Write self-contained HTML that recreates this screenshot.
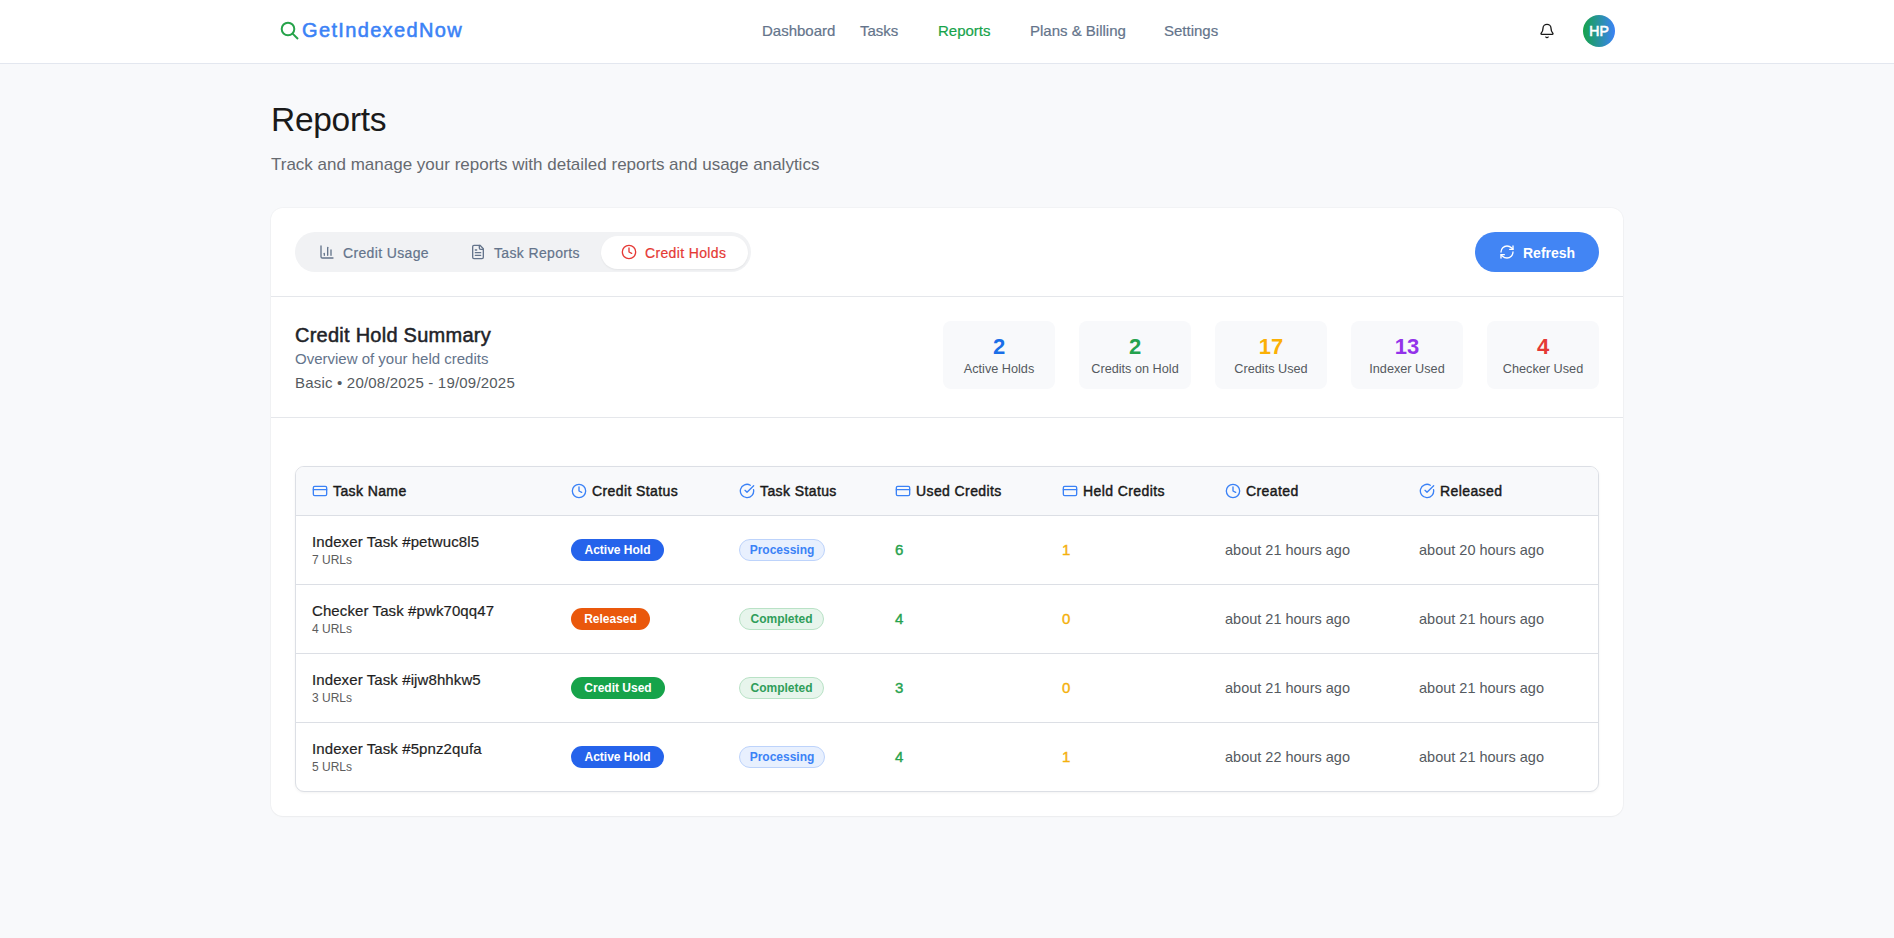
<!DOCTYPE html>
<html><head><meta charset="utf-8">
<style>
*{box-sizing:border-box;margin:0;padding:0}
html,body{width:1894px;height:938px;overflow:hidden}
body{background:#f8f9fb;font-family:"Liberation Sans",sans-serif;color:#1a1a1a;position:relative}
.abs{position:absolute;white-space:nowrap}
.hdr{position:absolute;left:0;top:0;width:1894px;height:64px;background:#fff;border-bottom:1px solid #e3e7ef}
.logo{left:302px;top:19px;font-size:20px;font-weight:400;-webkit-text-stroke:0.55px;letter-spacing:1.35px;color:#3b82f6;line-height:22px}
.nav{top:22px;font-size:15px;line-height:17px;color:#64748b;-webkit-text-stroke:0.2px}
.nav.on{color:#16a34a}
.avatar{left:1583px;top:15px;width:32px;height:32px;border-radius:50%;background:linear-gradient(to right,#16a34a 0%,#3b82f6 100%);color:#fff;font-weight:400;-webkit-text-stroke:0.6px;font-size:14px;line-height:32px;text-align:center}
.title{left:271px;top:100.5px;font-size:33.5px;letter-spacing:-0.3px;line-height:38px;color:#1a1a1a}
.sub{left:271px;top:155px;font-size:17px;line-height:20px;color:#666a70}
.card{position:absolute;left:271px;top:208px;width:1352px;height:608px;background:#fff;border-radius:12px;box-shadow:0 0 0 1px rgba(0,0,0,0.025),0 1px 2px rgba(0,0,0,0.03)}
.line{position:absolute;left:271px;width:1352px;height:1px;background:#e5e7eb}
.tabs{left:295px;top:232px;width:456px;height:40px;border-radius:20px;background:#f1f2f4}
.tabon{left:601px;top:236px;width:147px;height:33px;border-radius:16.5px;background:#fff;box-shadow:0 1px 2px rgba(0,0,0,0.06)}
.tabt{top:245px;font-size:14px;letter-spacing:0.35px;-webkit-text-stroke:0.2px;line-height:16px;color:#64748b}
.btn{left:1475px;top:232px;width:124px;height:40px;border-radius:20px;background:#4285f4}
.btnt{left:1523px;top:245px;font-size:14px;line-height:16px;color:#fff;font-weight:700}
.h2{left:295px;top:324px;font-size:20px;line-height:22px;font-weight:400;-webkit-text-stroke:0.5px;letter-spacing:0.25px;color:#1f2328}
.ov{left:295px;top:351px;font-size:15px;line-height:16px;color:#64748b}
.basic{left:295px;top:375px;font-size:15px;letter-spacing:0.2px;line-height:16px;color:#555a60}
.stat{top:321px;width:112px;height:68px;border-radius:8px;background:#f8f9fb;text-align:center}
.stat .n{position:absolute;left:0;width:112px;top:15px;font-size:22px;line-height:22px;font-weight:700}
.stat .l{position:absolute;left:0;width:112px;top:41px;font-size:12.7px;line-height:14px;color:#555a60}
.tbl{left:295px;top:466px;width:1304px;height:326px;border:1px solid #dcdfe5;border-radius:9px;overflow:hidden;background:#fff;box-shadow:0 1px 3px rgba(0,0,0,0.05)}
.thead{position:absolute;left:0;top:0;width:1302px;height:49px;background:#f8f9fb;border-bottom:1px solid #dcdfe5}
.rowline{position:absolute;left:0;width:1302px;height:1px;background:#dcdfe5}
.th{top:483px;font-size:14px;line-height:16px;font-weight:400;-webkit-text-stroke:0.45px;letter-spacing:0.4px;color:#1a1a1a}
.ic{position:absolute}
.tn{font-size:15px;letter-spacing:0.1px;-webkit-text-stroke:0.2px;line-height:16px;color:#1f1f1f}
.urls{font-size:12px;line-height:14px;color:#5c5c5c}
.badge{height:22px;border-radius:11px;font-size:12px;line-height:22px;font-weight:700;color:#fff;text-align:center}
.pill{height:22px;border-radius:11px;font-size:12px;line-height:20px;font-weight:700;text-align:center;border:1px solid}
.num{font-size:15px;line-height:16px;font-weight:400;-webkit-text-stroke:0.4px}
.date{font-size:14.5px;line-height:16px;color:#555a60}
</style></head><body>
<div class="hdr"></div>
<!-- logo -->
<svg class="abs" style="left:279px;top:20px" width="22" height="22" viewBox="0 0 22 22"><circle cx="9" cy="9" r="6.3" fill="none" stroke="#26a34a" stroke-width="2"/><line x1="13.6" y1="13.6" x2="19" y2="19" stroke="#26a34a" stroke-width="2"/></svg>
<div class="abs logo">GetIndexedNow</div>
<div class="abs nav" style="left:762px">Dashboard</div>
<div class="abs nav" style="left:860px">Tasks</div>
<div class="abs nav on" style="left:938px">Reports</div>
<div class="abs nav" style="left:1030px">Plans &amp; Billing</div>
<div class="abs nav" style="left:1164px">Settings</div>
<svg class="abs" style="left:1539px;top:22.5px" width="16" height="16" viewBox="0 0 24 24" fill="none" stroke="#1a1a1a" stroke-width="2" stroke-linecap="round" stroke-linejoin="round"><path d="M10.268 21a2 2 0 0 0 3.464 0"/><path d="M3.262 15.326A1 1 0 0 0 4 17h16a1 1 0 0 0 .74-1.673C19.41 13.956 18 12.499 18 8A6 6 0 0 0 6 8c0 4.499-1.411 5.956-2.738 7.326"/></svg>
<div class="abs avatar">HP</div>

<div class="abs title">Reports</div>
<div class="abs sub">Track and manage your reports with detailed reports and usage analytics</div>

<div class="card"></div>
<div class="abs tabs"></div>
<div class="abs tabon"></div>
<svg class="abs" style="left:319px;top:244px" width="16" height="16" viewBox="0 0 24 24" fill="none" stroke="#64748b" stroke-width="2" stroke-linecap="round" stroke-linejoin="round"><path d="M3 3v16a2 2 0 0 0 2 2h16"/><path d="M18 17V9"/><path d="M13 17V5"/><path d="M8 17v-3"/></svg>
<div class="abs tabt" style="left:343px">Credit Usage</div>
<svg class="abs" style="left:470px;top:244px" width="16" height="16" viewBox="0 0 24 24" fill="none" stroke="#64748b" stroke-width="2" stroke-linecap="round" stroke-linejoin="round"><path d="M15 2H6a2 2 0 0 0-2 2v16a2 2 0 0 0 2 2h12a2 2 0 0 0 2-2V7Z"/><path d="M14 2v4a2 2 0 0 0 2 2h4"/><path d="M10 9H8"/><path d="M16 13H8"/><path d="M16 17H8"/></svg>
<div class="abs tabt" style="left:494px">Task Reports</div>
<svg class="abs" style="left:621px;top:244px" width="16" height="16" viewBox="0 0 24 24" fill="none" stroke="#e53935" stroke-width="2" stroke-linecap="round" stroke-linejoin="round"><circle cx="12" cy="12" r="10"/><polyline points="12 6 12 12 16 14"/></svg>
<div class="abs tabt" style="left:645px;color:#e53935">Credit Holds</div>

<div class="abs btn"></div>
<svg class="abs" style="left:1499px;top:244px" width="16" height="16" viewBox="0 0 24 24" fill="none" stroke="#fff" stroke-width="2" stroke-linecap="round" stroke-linejoin="round"><path d="M3 12a9 9 0 0 1 9-9 9.75 9.75 0 0 1 6.74 2.74L21 8"/><path d="M21 3v5h-5"/><path d="M21 12a9 9 0 0 1-9 9 9.75 9.75 0 0 1-6.74-2.74L3 16"/><path d="M8 16H3v5"/></svg>
<div class="abs btnt">Refresh</div>

<div class="line" style="top:296px"></div>

<div class="abs h2">Credit Hold Summary</div>
<div class="abs ov">Overview of your held credits</div>
<div class="abs basic">Basic • 20/08/2025 - 19/09/2025</div>

<div class="abs stat" style="left:943px"><div class="n" style="color:#1a6fe8">2</div><div class="l">Active Holds</div></div>
<div class="abs stat" style="left:1079px"><div class="n" style="color:#23a24d">2</div><div class="l">Credits on Hold</div></div>
<div class="abs stat" style="left:1215px"><div class="n" style="color:#fbb005">17</div><div class="l">Credits Used</div></div>
<div class="abs stat" style="left:1351px"><div class="n" style="color:#9333ea">13</div><div class="l">Indexer Used</div></div>
<div class="abs stat" style="left:1487px"><div class="n" style="color:#e53935">4</div><div class="l">Checker Used</div></div>

<div class="line" style="top:417px"></div>

<div class="abs tbl">
  <div class="thead"></div>
  <div class="rowline" style="top:117px"></div>
  <div class="rowline" style="top:186px"></div>
  <div class="rowline" style="top:255px"></div>
</div>
<svg class="abs" style="left:312px;top:483px" width="16" height="16" viewBox="0 0 24 24" fill="none" stroke="#3b82f6" stroke-width="2" stroke-linecap="round" stroke-linejoin="round"><rect width="20" height="14" x="2" y="5" rx="2"/><line x1="2" x2="22" y1="10" y2="10"/></svg>
<div class="abs th" style="left:333px">Task Name</div>
<svg class="abs" style="left:571px;top:483px" width="16" height="16" viewBox="0 0 24 24" fill="none" stroke="#3b82f6" stroke-width="2" stroke-linecap="round" stroke-linejoin="round"><circle cx="12" cy="12" r="10"/><polyline points="12 6 12 12 16 14"/></svg>
<div class="abs th" style="left:592px">Credit Status</div>
<svg class="abs" style="left:739px;top:483px" width="16" height="16" viewBox="0 0 24 24" fill="none" stroke="#3b82f6" stroke-width="2" stroke-linecap="round" stroke-linejoin="round"><path d="M21.801 10A10 10 0 1 1 17 3.335"/><path d="m9 11 3 3L22 4"/></svg>
<div class="abs th" style="left:760px">Task Status</div>
<svg class="abs" style="left:895px;top:483px" width="16" height="16" viewBox="0 0 24 24" fill="none" stroke="#3b82f6" stroke-width="2" stroke-linecap="round" stroke-linejoin="round"><rect width="20" height="14" x="2" y="5" rx="2"/><line x1="2" x2="22" y1="10" y2="10"/></svg>
<div class="abs th" style="left:916px">Used Credits</div>
<svg class="abs" style="left:1062px;top:483px" width="16" height="16" viewBox="0 0 24 24" fill="none" stroke="#3b82f6" stroke-width="2" stroke-linecap="round" stroke-linejoin="round"><rect width="20" height="14" x="2" y="5" rx="2"/><line x1="2" x2="22" y1="10" y2="10"/></svg>
<div class="abs th" style="left:1083px">Held Credits</div>
<svg class="abs" style="left:1225px;top:483px" width="16" height="16" viewBox="0 0 24 24" fill="none" stroke="#3b82f6" stroke-width="2" stroke-linecap="round" stroke-linejoin="round"><circle cx="12" cy="12" r="10"/><polyline points="12 6 12 12 16 14"/></svg>
<div class="abs th" style="left:1246px">Created</div>
<svg class="abs" style="left:1419px;top:483px" width="16" height="16" viewBox="0 0 24 24" fill="none" stroke="#3b82f6" stroke-width="2" stroke-linecap="round" stroke-linejoin="round"><path d="M21.801 10A10 10 0 1 1 17 3.335"/><path d="m9 11 3 3L22 4"/></svg>
<div class="abs th" style="left:1440px">Released</div>
<div class="abs tn" style="left:312px;top:534px">Indexer Task #petwuc8l5</div>
<div class="abs urls" style="left:312px;top:553px">7 URLs</div>
<div class="abs badge" style="left:571px;top:539px;width:93px;background:#2563eb">Active Hold</div>
<div class="abs pill" style="left:739px;top:539px;width:86px;background:#e8f0fe;border-color:#bdd3fb;color:#3b82f6">Processing</div>
<div class="abs num" style="left:895px;top:542px;color:#26a24e">6</div>
<div class="abs num" style="left:1062px;top:542px;color:#f4b00c">1</div>
<div class="abs date" style="left:1225px;top:542px">about 21 hours ago</div>
<div class="abs date" style="left:1419px;top:542px">about 20 hours ago</div>
<div class="abs tn" style="left:312px;top:603px">Checker Task #pwk70qq47</div>
<div class="abs urls" style="left:312px;top:622px">4 URLs</div>
<div class="abs badge" style="left:571px;top:608px;width:79px;background:#ea580c">Released</div>
<div class="abs pill" style="left:739px;top:608px;width:85px;background:#e7f5ec;border-color:#b9e2c6;color:#2f9e5a">Completed</div>
<div class="abs num" style="left:895px;top:611px;color:#26a24e">4</div>
<div class="abs num" style="left:1062px;top:611px;color:#f4b00c">0</div>
<div class="abs date" style="left:1225px;top:611px">about 21 hours ago</div>
<div class="abs date" style="left:1419px;top:611px">about 21 hours ago</div>
<div class="abs tn" style="left:312px;top:672px">Indexer Task #ijw8hhkw5</div>
<div class="abs urls" style="left:312px;top:691px">3 URLs</div>
<div class="abs badge" style="left:571px;top:677px;width:94px;background:#16a34a">Credit Used</div>
<div class="abs pill" style="left:739px;top:677px;width:85px;background:#e7f5ec;border-color:#b9e2c6;color:#2f9e5a">Completed</div>
<div class="abs num" style="left:895px;top:680px;color:#26a24e">3</div>
<div class="abs num" style="left:1062px;top:680px;color:#f4b00c">0</div>
<div class="abs date" style="left:1225px;top:680px">about 21 hours ago</div>
<div class="abs date" style="left:1419px;top:680px">about 21 hours ago</div>
<div class="abs tn" style="left:312px;top:741px">Indexer Task #5pnz2qufa</div>
<div class="abs urls" style="left:312px;top:760px">5 URLs</div>
<div class="abs badge" style="left:571px;top:746px;width:93px;background:#2563eb">Active Hold</div>
<div class="abs pill" style="left:739px;top:746px;width:86px;background:#e8f0fe;border-color:#bdd3fb;color:#3b82f6">Processing</div>
<div class="abs num" style="left:895px;top:749px;color:#26a24e">4</div>
<div class="abs num" style="left:1062px;top:749px;color:#f4b00c">1</div>
<div class="abs date" style="left:1225px;top:749px">about 22 hours ago</div>
<div class="abs date" style="left:1419px;top:749px">about 21 hours ago</div>
</body></html>
